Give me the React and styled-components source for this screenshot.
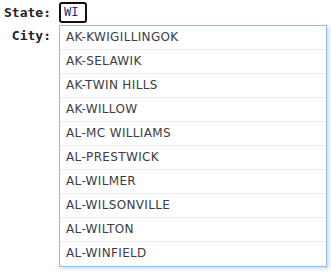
import styled, { createGlobalStyle } from 'styled-components';

const GlobalStyle = createGlobalStyle`
  html, body, #root {
    margin: 0;
    padding: 0;
    height: 100%;
    background: #fff;
  }
`;

const Form = styled.div`
  position: relative;
  box-sizing: border-box;
  min-height: 272px;
  display: grid;
  grid-template-columns: 51px auto;
  grid-template-rows: 21px 21px 1fr;
  column-gap: 8px;
  row-gap: 2px;
  padding: 2px 0 0 0;
  font-family: 'DejaVu Sans Mono', monospace;
  font-size: 13px;
  font-weight: 700;
  color: #222;
`;

const Label = styled.label`
  text-align: right;
  line-height: 21px;
  height: 21px;
`;

const Field = styled.div`
  position: relative;
  height: 21px;
`;

const StateInput = styled.div`
  box-sizing: border-box;
  width: 28px;
  height: 21px;
  border: 2px solid #111;
  border-radius: 3px;
  padding: 0 3px;
  line-height: 17px;
  font-family: 'DejaVu Sans Mono', monospace;
  font-size: 12px;
  font-weight: 400;
  color: #2a2a7a;
`;

const Menu = styled.ul`
  position: absolute;
  top: 23px;
  left: 0;
  box-sizing: border-box;
  width: 268px;
  margin: 0;
  padding: 0;
  list-style: none;
  background: #fff;
  border: 1px solid #8cbcf5;
  box-shadow: 2px 2px 3px rgba(0, 0, 0, 0.15);
  z-index: 2;
`;

const Item = styled.li`
  height: 24px;
  box-sizing: border-box;
  padding: 0 0 0 6px;
  line-height: 23px;
  font-family: 'DejaVu Sans', sans-serif;
  font-size: 12px;
  letter-spacing: 0.35px;
  font-weight: 400;
  color: #3c3c3c;
  border-bottom: ${p => (p.$last ? 'none' : '1px solid #ececec')};
`;

const cities = [
  'AK-KWIGILLINGOK',
  'AK-SELAWIK',
  'AK-TWIN HILLS',
  'AK-WILLOW',
  'AL-MC WILLIAMS',
  'AL-PRESTWICK',
  'AL-WILMER',
  'AL-WILSONVILLE',
  'AL-WILTON',
  'AL-WINFIELD',
];

export default function App() {
  return (
    <>
      <GlobalStyle />
      <Form>
        <Label>State:</Label>
        <Field>
          <StateInput>WI</StateInput>
          <Menu>
            {cities.map((c, i) => (
              <Item key={c} $last={i === cities.length - 1}>
                {c}
              </Item>
            ))}
          </Menu>
        </Field>
        <Label>City:</Label>
        <Field />
      </Form>
    </>
  );
}
